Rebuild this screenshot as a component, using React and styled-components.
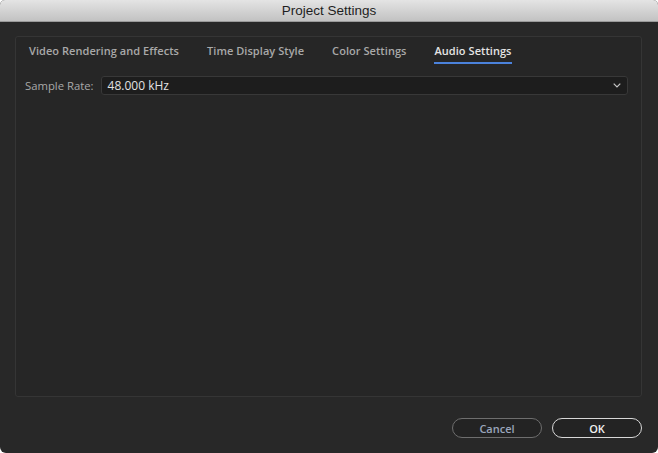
import React, { useState } from 'react'
import styled, { createGlobalStyle } from 'styled-components'

const Global = createGlobalStyle`
    html, body {
        margin: 0;
        padding: 0;
        background: #ffffff;
    }
    * {
        box-sizing: border-box;
    }
`

const tabs = ['Video Rendering and Effects', 'Time Display Style', 'Color Settings', 'Audio Settings']

function App() {
    const [active, setActive] = useState(3)

    return (
        <>
            <Global />
            <Window>
                <TitleBar>Project Settings</TitleBar>
                <Body>
                    <Panel>
                        <TabRow>
                            {tabs.map((t, i) => (
                                <Tab key={t} active={i === active} onClick={() => setActive(i)}>
                                    {t}
                                </Tab>
                            ))}
                        </TabRow>
                        <Field>
                            <Label>Sample Rate:</Label>
                            <Select>
                                <span>48.000 kHz</span>
                                <svg width="8" height="5" viewBox="0 0 8 5">
                                    <path d="M0.7 0.7 L4 4 L7.3 0.7" fill="none" stroke="#c4c4c4" strokeWidth="1.2" />
                                </svg>
                            </Select>
                        </Field>
                    </Panel>
                    <Footer>
                        <Button>Cancel</Button>
                        <Button primary>OK</Button>
                    </Footer>
                </Body>
            </Window>
        </>
    )
}

export default App

const Window = styled.div`
    width: 658px;
    height: 453px;
    display: flex;
    flex-direction: column;
    background: #282828;
    border-radius: 5px 5px 6px 6px;
    overflow: hidden;
    font-family: "Open Sans", "Liberation Sans", sans-serif;
`

const TitleBar = styled.div`
    height: 22px;
    flex: none;
    display: flex;
    align-items: center;
    justify-content: center;
    background: linear-gradient(#e4e4e4, #c2c2c2);
    border-bottom: 1px solid #9a9a9a;
    color: #1e1e1e;
    font-family: "Liberation Sans", "Helvetica", sans-serif;
    font-size: 13.5px;
`

const Body = styled.div`
    flex: 1;
    display: flex;
    flex-direction: column;
    padding: 14px 16px 15px 15px;
`

const Panel = styled.div`
    height: 361px;
    border: 1px solid #353535;
    border-radius: 3px;
    background: #262626;
    padding: 0 13px 0 9px;
`

const TabRow = styled.div`
    display: flex;
    gap: 28px;
    padding: 6px 0 0 4px;
`

const Tab = styled.div`
    font-size: 11px;
    font-weight: 600;
    letter-spacing: 0.05px;
    color: ${p => p.active ? '#e4e4e4' : '#a9a9a9'};
    padding: 0 0 4px;
    border-bottom: 2px solid ${p => p.active ? '#4b82dc' : 'transparent'};
    cursor: pointer;
`

const Field = styled.div`
    display: flex;
    align-items: center;
    gap: 7px;
    margin-top: 12px;
`

const Label = styled.div`
    font-size: 11.3px;
    color: #a9a9a9;
`

const Select = styled.div`
    flex: 1;
    height: 19px;
    display: flex;
    align-items: center;
    justify-content: space-between;
    padding: 0 6px 0 6px;
    background: #1d1d1d;
    border: 1px solid #383838;
    border-radius: 3px;
    color: #e2e2e2;
    font-size: 12px;
`

const Footer = styled.div`
    display: flex;
    justify-content: flex-end;
    gap: 10px;
    margin-top: auto;
`

const Button = styled.button`
    width: 90px;
    height: 20px;
    border-radius: 10px;
    background: #232323;
    border: 1.5px solid ${p => p.primary ? '#d8d8d8' : '#6e6e6e'};
    color: ${p => p.primary ? '#f0f0f0' : '#9aa6bb'};
    font-family: "Open Sans", "Liberation Sans", sans-serif;
    font-size: 11px;
    font-weight: 600;
    padding: 0;
    cursor: pointer;
`
